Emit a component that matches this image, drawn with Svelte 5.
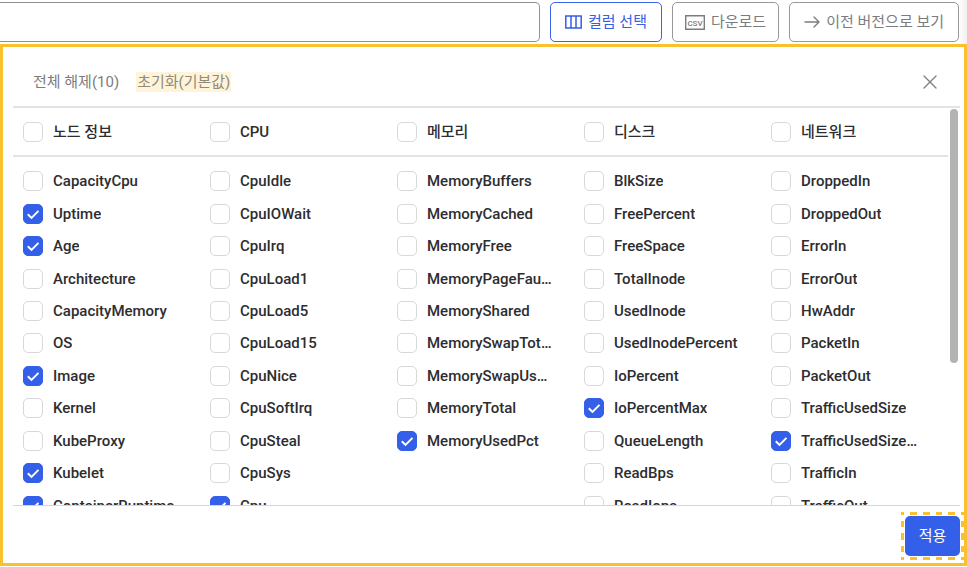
<script>
  let groups = $state(
    [
      ['노드 정보', ['CapacityCpu', '*Uptime', '*Age', 'Architecture', 'CapacityMemory', 'OS', '*Image', 'Kernel', 'KubeProxy', '*Kubelet', '*ContainerRuntime']],
      ['CPU', ['CpuIdle', 'CpuIOWait', 'CpuIrq', 'CpuLoad1', 'CpuLoad5', 'CpuLoad15', 'CpuNice', 'CpuSoftIrq', 'CpuSteal', 'CpuSys', '*Cpu']],
      ['메모리', ['MemoryBuffers', 'MemoryCached', 'MemoryFree', 'MemoryPageFaults', 'MemoryShared', 'MemorySwapTotal', 'MemorySwapUsed', 'MemoryTotal', '*MemoryUsedPct']],
      ['디스크', ['BlkSize', 'FreePercent', 'FreeSpace', 'TotalInode', 'UsedInode', 'UsedInodePercent', 'IoPercent', '*IoPercentMax', 'QueueLength', 'ReadBps', 'ReadIops']],
      ['네트워크', ['DroppedIn', 'DroppedOut', 'ErrorIn', 'ErrorOut', 'HwAddr', 'PacketIn', 'PacketOut', 'TrafficUsedSize', '*TrafficUsedSizeMax', 'TrafficIn', 'TrafficOut']]
    ].map(([title, items]) => ({
      title,
      all: false,
      items: items.map((n) => ({ name: n.replace('*', ''), on: n.startsWith('*') }))
    }))
  );
  let query = $state('');

  function toggleAll(group) {
    for (const item of group.items) item.on = group.all;
  }
  function clearAll() {
    for (const group of groups) {
      group.all = false;
      toggleAll(group);
    }
  }
</script>

<div class="page">
  <header class="toolbar">
    <input class="search" type="text" aria-label="검색" bind:value={query} />
    <button class="tool active" type="button">
      <svg width="17" height="14" viewBox="0 0 17 14" fill="none" stroke="currentColor" stroke-width="1.5">
        <path d="M.8 1h15.400v12H.8zM6 1v12M11 1v12" />
      </svg>
      컬럼 선택
    </button>
    <button class="tool csv" type="button">
      <svg width="20" height="15" viewBox="0 0 20 15" aria-hidden="true">
        <path d="M.7.7h18.600v13.600H.7z" fill="none" stroke="currentColor" stroke-width="1.4" />
        <text x="10" y="10.500" text-anchor="middle" fill="currentColor">CSV</text>
      </svg>
      다운로드
    </button>
    <button class="tool" type="button">
      <svg width="16" height="12" viewBox="0 0 16 12" fill="none" stroke="currentColor" stroke-width="1.4" stroke-linecap="round" stroke-linejoin="round">
        <path d="M1 6h14M10 1l5 5-5 5" />
      </svg>
      이전 버전으로 보기
    </button>
  </header>

  <section class="panel">
    <div class="actions">
      <button class="text" type="button" onclick={clearAll}>전체 해제(10)</button>
      <button class="text marked" type="button">초기화(기본값)</button>
      <button class="close" type="button" aria-label="닫기">
        <svg width="14" height="14" viewBox="0 0 14 14" fill="none" stroke="currentColor" stroke-width="1.3" stroke-linecap="round">
          <path d="M1 1l12 12M13 1L1 13" />
        </svg>
      </button>
    </div>

    <div class="body">
      <div class="content">
        <div class="heads">
          {#each groups as group}
            <label>
              <input type="checkbox" bind:checked={group.all} onchange={() => toggleAll(group)} />
              <span>{group.title}</span>
            </label>
          {/each}
        </div>
        <div class="lists">
          {#each groups as group}
            <div class="list">
              {#each group.items as item}
                <label>
                  <input type="checkbox" bind:checked={item.on} />
                  <span>{item.name}</span>
                </label>
              {/each}
            </div>
          {/each}
        </div>
      </div>
      <div class="track"><div class="thumb"></div></div>
    </div>

    <footer>
      <div class="focus">
        <svg width="63" height="48" viewBox="0 0 63 48" fill="none" stroke="#fbc02d" stroke-width="3" aria-hidden="true">
          <path stroke-dasharray="3 6 7 6 7 6 6 6 7 6 3 99" d="M0 1.5h63M0 46.500h63" />
          <path stroke-dasharray="3 6 6 6 7 6 6 5 3 99" d="M1.500 0v48M61.500 0v48" />
        </svg>
        <button class="apply" type="button">적용</button>
      </div>
    </footer>
  </section>
</div>

<style>
  :global(body) {
    margin: 0;
    background: #fff;
  }
  .page,
  button,
  input {
    font-family: Roboto, 'Noto Sans CJK KR', sans-serif;
    font-size: 15px;
    line-height: 20px;
  }
  .page,
  .page * {
    box-sizing: border-box;
  }
  button {
    margin: 0;
    padding: 0;
    border: 0;
    background: none;
    cursor: pointer;
  }
  .toolbar {
    display: flex;
    gap: 10px;
    height: 44px;
    padding: 2px 8px 2px 0;
    background: linear-gradient(to left, #f0f0f0, #fff 8px);
  }
  .search {
    flex: 1;
    min-width: 0;
    height: 40px;
    margin: 0;
    padding: 0 12px;
    border: 1px solid #909094;
    border-left: 0;
    border-radius: 0 5px 5px 0;
    background: #fff;
  }
  .tool {
    display: flex;
    align-items: center;
    justify-content: center;
    gap: 6px;
    height: 40px;
    padding: 0 14px;
    border: 1px solid #98989b;
    border-radius: 5px;
    background: #fff;
    color: #7c7c7f;
    white-space: nowrap;
  }
  .tool.csv {
    padding: 0 12px;
  }
  .tool text {
    font-size: 8px;
    font-weight: 500;
  }
  .tool.active {
    border-color: #3b63eb;
    color: #345fe8;
  }
  .panel {
    display: flex;
    flex-direction: column;
    border: 3px solid #fbc02d;
    padding-left: 10px;
    background: #fff;
  }
  .actions {
    display: flex;
    align-items: center;
    gap: 17px;
    height: 61px;
    margin-right: 4px;
    padding: 10px 23px 0 20px;
    border-bottom: 2px solid #e3e3e3;
  }
  .text {
    color: #7c7c7f;
  }
  .marked {
    padding: 0 1px;
    background: #fff4da;
    color: #918a78;
  }
  .close {
    display: flex;
    margin-left: auto;
    color: #7c7c7f;
  }
  .body {
    display: flex;
    height: 398px;
    margin-right: 4px;
    overflow: hidden;
    border-bottom: 1px solid #d6d6d6;
  }
  .content {
    flex: 1;
    min-width: 0;
  }
  .heads,
  .lists {
    display: grid;
    grid-template-columns: repeat(5, minmax(0, 1fr));
  }
  .heads {
    height: 49px;
    padding-top: 1px;
    border-bottom: 2px solid #e3e3e3;
  }
  .lists {
    padding-top: 8px;
  }
  .list {
    display: grid;
    grid-template-columns: minmax(0, 1fr);
    grid-template-rows: repeat(11, 1fr);
    height: 357px;
  }
  label {
    display: flex;
    align-items: center;
    gap: 10px;
    padding: 0 22px 0 10px;
    color: #2d2d30;
    font-weight: 500;
    cursor: pointer;
  }
  label span {
    min-width: 0;
    overflow: hidden;
    text-overflow: ellipsis;
    white-space: nowrap;
  }
  input[type='checkbox'] {
    flex: none;
    appearance: none;
    width: 20px;
    height: 20px;
    margin: 0;
    border: 1px solid #d8d8da;
    border-radius: 5px;
    background: #fff;
  }
  input[type='checkbox']:checked {
    border-color: #345fe8;
    background: #345fe8 url("data:image/svg+xml,%3Csvg xmlns='http://www.w3.org/2000/svg' viewBox='0 0 18 18' fill='none' stroke='white' stroke-width='2'%3E%3Cpath d='M3.800 9.200l3.700 3.700 7-7'/%3E%3C/svg%3E") center / 18px no-repeat;
  }
  .track {
    width: 12px;
    padding: 1px 2px;
  }
  .thumb {
    height: 254px;
    border-radius: 4px;
    background: #b3b3b3;
  }
  footer {
    display: flex;
    justify-content: flex-end;
    padding: 6px 0 3px;
  }
  .focus {
    position: relative;
    padding: 4px;
  }
  .focus svg {
    position: absolute;
    inset: 0;
    pointer-events: none;
  }
  .apply {
    display: block;
    width: 55px;
    height: 40px;
    border-radius: 5px;
    background: #345fe8;
    color: #fff;
  }
</style>
